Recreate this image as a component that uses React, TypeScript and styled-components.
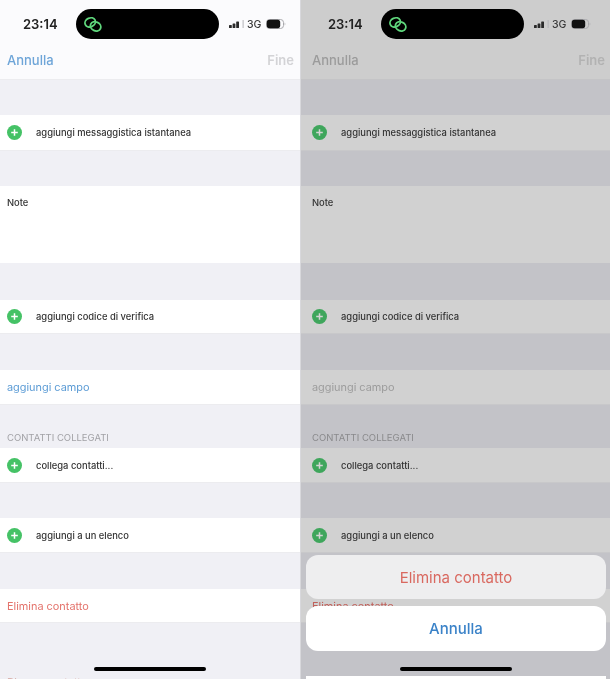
import { FC } from "react";
import styled, { createGlobalStyle } from "styled-components";

const GlobalStyle = createGlobalStyle`
    html, body {
        margin: 0;
        padding: 0;
        background: #ffffff;
    }
    body {
        font-family: "Inter", "Liberation Sans", sans-serif;
    }
`;

const PlusIcon: FC<{ dimmed?: boolean }> = ({ dimmed }) => (
    <svg width="15" height="15" viewBox="0 0 15 15">
        <circle cx="7.5" cy="7.5" r="7.5" fill={dimmed ? "#3fa65c" : "#45c266"} />
        <path d="M7.5 4.2v6.6M4.2 7.5h6.6" stroke={dimmed ? "#d4d4d4" : "#ffffff"} strokeWidth="1.5" />
    </svg>
);

const LinkIcon: FC = () => (
    <svg width="20" height="17" viewBox="0 0 20 17" fill="none" stroke="#5fd67c" strokeWidth="1.8">
        <ellipse cx="7.2" cy="6.4" rx="5.4" ry="4.4" transform="rotate(-25 7.2 6.4)" />
        <ellipse cx="12.6" cy="10.4" rx="5.4" ry="4.4" transform="rotate(25 12.6 10.4)" />
    </svg>
);

const SignalIcon: FC = () => (
    <svg width="15" height="8" viewBox="0 0 15 8">
        <rect x="0" y="5" width="2.8" height="3" rx="0.6" fill="#2a2a2a" />
        <rect x="3.6" y="3.4" width="2.8" height="4.6" rx="0.6" fill="#2a2a2a" />
        <rect x="7.2" y="1.4" width="2.8" height="6.6" rx="0.6" fill="#2a2a2a" />
        <rect x="13.6" y="0" width="1" height="8" fill="#b4b4b8" />
    </svg>
);

const BatteryIcon: FC = () => (
    <svg width="20" height="10" viewBox="0 0 20 10">
        <rect x="0.5" y="0.5" width="17" height="9" rx="3" fill="none" stroke="#a9a9ad" />
        <rect x="0.8" y="0.8" width="13.4" height="8.4" rx="2.6" fill="#111111" />
        <path d="M18.7 3.5c.8.3.8 2.7 0 3z" fill="#a9a9ad" />
    </svg>
);

const AddRow: FC<{ label: string; top: number; height: number; dimmed?: boolean }> = ({ label, top, height, dimmed }) => (
    <Row $top={top} $height={height} $dimmed={dimmed}>
        <PlusIcon dimmed={dimmed} />
        <RowLabel>{label}</RowLabel>
    </Row>
);

const ContactForm: FC<{ dimmed?: boolean }> = ({ dimmed }) => (
    <>
        <StatusBar $dimmed={dimmed}>
            <Clock>23:14</Clock>
            <Island>
                <LinkIcon />
            </Island>
            <StatusRight>
                <SignalIcon />
                <Network>3G</Network>
                <BatteryIcon />
            </StatusRight>
        </StatusBar>
        <NavBar $dimmed={dimmed}>
            <NavLink $dimmed={dimmed}>Annulla</NavLink>
            <NavDone $dimmed={dimmed}>Fine</NavDone>
        </NavBar>
        <AddRow label="aggiungi messaggistica istantanea" top={35} height={36} dimmed={dimmed} />
        <NoteRow $dimmed={dimmed}>
            <RowLabel>Note</RowLabel>
        </NoteRow>
        <AddRow label="aggiungi codice di verifica" top={37} height={34} dimmed={dimmed} />
        <Row $top={36} $height={35} $dimmed={dimmed}>
            <FieldLink $dimmed={dimmed}>aggiungi campo</FieldLink>
        </Row>
        <SectionTitle $dimmed={dimmed}>CONTATTI COLLEGATI</SectionTitle>
        <AddRow label="collega contatti..." top={0} height={35} dimmed={dimmed} />
        <AddRow label="aggiungi a un elenco" top={35} height={35} dimmed={dimmed} />
        <Row $top={36} $height={34} $dimmed={dimmed}>
            <DeleteLink $dimmed={dimmed}>Elimina contatto</DeleteLink>
        </Row>
        {!dimmed && <NextSection>Blocca contatto</NextSection>}
        <HomeBar />
    </>
);

const App: FC = () => (
    <Root>
        <GlobalStyle />
        <LeftPanel>
            <ContactForm />
        </LeftPanel>
        <RightPanel>
            <ContactForm dimmed />
            <ActionSheet>
                <SheetButton $tone="delete">Elimina contatto</SheetButton>
                <SheetButton $tone="cancel">Annulla</SheetButton>
                <SheetPeek />
            </ActionSheet>
        </RightPanel>
    </Root>
);

export default App;

const Root = styled.div`
    width: 610px;
    height: 679px;
    overflow: hidden;
    display: flex;
    filter: blur(0.45px);
`;

const LeftPanel = styled.div`
    position: relative;
    box-sizing: border-box;
    width: 301px;
    height: 679px;
    overflow: hidden;
    background: #f0f0f5;
    border-right: 1px solid #d8d8dc;
    display: flex;
    flex-direction: column;
`;

const RightPanel = styled.div`
    position: relative;
    box-sizing: border-box;
    width: 309px;
    height: 679px;
    padding-left: 4px;
    overflow: hidden;
    background: #c3c3c8;
    display: flex;
    flex-direction: column;
`;

const StatusBar = styled.div<{ $dimmed?: boolean }>`
    box-sizing: border-box;
    flex: none;
    height: 44px;
    margin-left: ${(p) => (p.$dimmed ? "-4px" : "0")};
    padding-left: ${(p) => (p.$dimmed ? "27px" : "23px")};
    padding-top: 9px;
    background: ${(p) => (p.$dimmed ? "#cdcdcd" : "#fbfbfd")};
    display: flex;
    align-items: flex-start;
`;

const Clock = styled.div`
    width: 53px;
    font-size: 13px;
    line-height: 30px;
    font-weight: 600;
    color: #222222;
`;

const Island = styled.div`
    box-sizing: border-box;
    width: 143px;
    height: 30px;
    border-radius: 15px;
    background: #000000;
    padding-left: 7px;
    display: flex;
    align-items: center;
`;

const StatusRight = styled.div`
    margin-left: 10px;
    height: 30px;
    display: flex;
    align-items: center;
    gap: 3px;
`;

const Network = styled.span`
    font-size: 10.5px;
    font-weight: 500;
    color: #3a3a3a;
    margin-right: 2px;
`;

const NavBar = styled.div<{ $dimmed?: boolean }>`
    box-sizing: border-box;
    flex: none;
    height: 36px;
    margin-left: ${(p) => (p.$dimmed ? "-4px" : "0")};
    padding: 0 ${(p) => (p.$dimmed ? "5px" : "6px")} 4px ${(p) => (p.$dimmed ? "11px" : "7px")};
    background: ${(p) => (p.$dimmed ? "#cdcdcd" : "#fbfbfd")};
    border-bottom: 1px solid ${(p) => (p.$dimmed ? "#c4c4c6" : "#ececef")};
    display: flex;
    align-items: center;
    justify-content: space-between;
`;

const NavLink = styled.span<{ $dimmed?: boolean }>`
    font-size: 13px;
    font-weight: 500;
    color: ${(p) => (p.$dimmed ? "#9b9b9b" : "#6ea5d8")};
`;

const NavDone = styled.span<{ $dimmed?: boolean }>`
    font-size: 13px;
    font-weight: 600;
    color: ${(p) => (p.$dimmed ? "#b2b2b2" : "#d3d3d6")};
`;

const Row = styled.div<{ $top: number; $height: number; $dimmed?: boolean }>`
    box-sizing: border-box;
    flex: none;
    height: ${(p) => p.$height}px;
    margin-top: ${(p) => p.$top}px;
    margin-left: ${(p) => (p.$dimmed ? "-4px" : "0")};
    padding-left: ${(p) => (p.$dimmed ? "11px" : "7px")};
    background: ${(p) => (p.$dimmed ? "#d1d1d1" : "#ffffff")};
    border-bottom: 1px solid ${(p) => (p.$dimmed ? "#c8c8ca" : "#ececef")};
    display: flex;
    align-items: center;
    gap: 14px;
`;

const NoteRow = styled.div<{ $dimmed?: boolean }>`
    box-sizing: border-box;
    flex: none;
    height: 77px;
    margin-top: 35px;
    margin-left: ${(p) => (p.$dimmed ? "-4px" : "0")};
    padding: 10px 0 0 ${(p) => (p.$dimmed ? "11px" : "7px")};
    background: ${(p) => (p.$dimmed ? "#d1d1d1" : "#ffffff")};
    display: flex;
    align-items: flex-start;
`;

const RowLabel = styled.span`
    margin-top: 1px;
    font-size: 9.4px;
    line-height: 12px;
    font-weight: 500;
    color: #333333;
`;

const FieldLink = styled.span<{ $dimmed?: boolean }>`
    font-size: 10.9px;
    color: ${(p) => (p.$dimmed ? "#9c9c9c" : "#5b9bd5")};
`;

const DeleteLink = styled.span<{ $dimmed?: boolean }>`
    font-size: 10.9px;
    color: ${(p) => (p.$dimmed ? "#c0605a" : "#e4736c")};
`;

const SectionTitle = styled.div<{ $dimmed?: boolean }>`
    flex: none;
    height: 21px;
    margin-top: 22px;
    padding-left: 7px;
    font-size: 9.5px;
    line-height: 21px;
    color: ${(p) => (p.$dimmed ? "#8a8a8c" : "#a2a2a6")};
`;

const NextSection = styled.div`
    flex: none;
    margin-top: 52px;
    padding-left: 7px;
    font-size: 10.9px;
    line-height: 14px;
    color: #d9b4b0;
`;

const HomeBar = styled.div`
    position: absolute;
    bottom: 8px;
    left: 50%;
    width: 112px;
    height: 4px;
    margin-left: -56px;
    border-radius: 2px;
    background: #000000;
`;

const ActionSheet = styled.div`
    position: absolute;
    left: 5px;
    right: 4px;
    top: 555px;
    display: flex;
    flex-direction: column;
    gap: 7px;
`;

const SheetButton = styled.div<{ $tone: "delete" | "cancel" }>`
    height: ${(p) => (p.$tone === "delete" ? 44 : 45)}px;
    border-radius: 12px;
    background: ${(p) => (p.$tone === "delete" ? "#eeeeef" : "#ffffff")};
    color: ${(p) => (p.$tone === "delete" ? "#d9685f" : "#3a82c8")};
    font-size: 15px;
    font-weight: ${(p) => (p.$tone === "delete" ? 400 : 500)};
    display: flex;
    align-items: center;
    justify-content: center;
`;

const SheetPeek = styled.div`
    height: 10px;
    margin-top: 18px;
    background: #ffffff;
`;
